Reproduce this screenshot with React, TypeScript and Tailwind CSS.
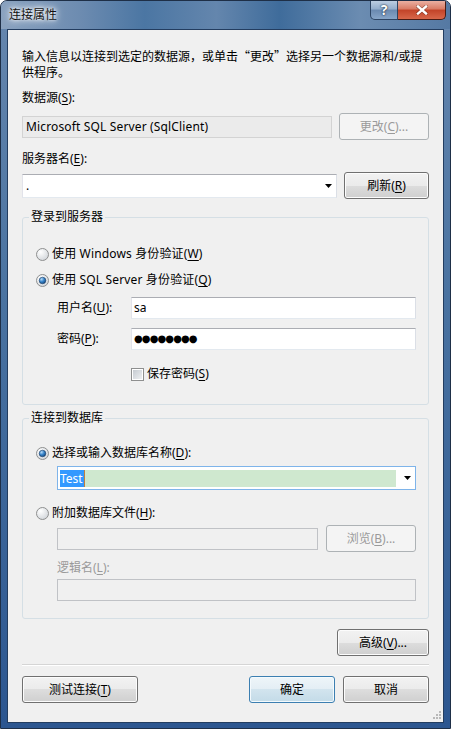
import React from "react";

function U({ children }: { children: React.ReactNode }) {
  return <span className="underline underline-offset-[2px] decoration-[1px]">{children}</span>;
}

function Radio({ checked }: { checked?: boolean }) {
  return (
    <svg width="13" height="13" viewBox="0 0 13 13" className="shrink-0">
      <defs>
        <radialGradient id="rbg" cx="0.35" cy="0.3" r="0.8">
          <stop offset="0" stopColor="#ffffff" />
          <stop offset="1" stopColor="#cfd3d8" />
        </radialGradient>
        <radialGradient id="rdot" cx="0.35" cy="0.3" r="0.75">
          <stop offset="0" stopColor="#b9dcf7" />
          <stop offset="0.5" stopColor="#3a86cc" />
          <stop offset="1" stopColor="#12477f" />
        </radialGradient>
      </defs>
      <circle cx="6.5" cy="6.5" r="6" fill="url(#rbg)" stroke="#8e8f8f" strokeWidth="1" />
      {checked && <circle cx="6.5" cy="6.5" r="3.3" fill="url(#rdot)" stroke="#1d3e66" strokeWidth="0.6" />}
    </svg>
  );
}

function Check() {
  return (
    <div className="w-[13px] h-[13px] shrink-0 border border-[#8e8f8f] bg-white p-[1px]">
      <div className="w-full h-full bg-[linear-gradient(135deg,#c6cbd1,#eef0f2)]" />
    </div>
  );
}

function Arrow() {
  return (
    <svg width="7" height="4" viewBox="0 0 7 4" className="shrink-0">
      <path d="M0 0h7L3.5 4z" fill="#000" />
    </svg>
  );
}

function Btn({ children, className = "", disabled, def }: { children: React.ReactNode; className?: string; disabled?: boolean; def?: boolean }) {
  let cls = "";
  if (disabled) cls = "border-[#adb2b5] bg-[#f4f4f4] text-[#9a9a9a]";
  else if (def)
    cls = "border-[#3c7fb1] bg-[linear-gradient(to_bottom,#eef5f9_0%,#e3eef4_50%,#d2e4ee_50%,#c3dbe8_100%)] shadow-[inset_0_0_0_1px_#f4fafd] text-black";
  else
    cls = "border-[#707070] bg-[linear-gradient(to_bottom,#f2f2f2_0%,#ebebeb_50%,#dddddd_50%,#cfcfcf_100%)] shadow-[inset_0_0_0_1px_#fcfcfc] text-black";
  return (
    <div className={`h-[27px] shrink-0 flex items-center justify-center rounded-[3px] border ${cls} ${className}`}>
      {children}
    </div>
  );
}

export default function App() {
  return (
    <div className="w-[451px] h-[729px] flex flex-col rounded-t-[7px] border border-[#1e2f47] bg-[linear-gradient(to_bottom,#7f99b8_0px,#6485ad_28px,#4a73a1_40%,#2c5690_100%)] font-['Noto_Sans','Noto_Sans_CJK_SC',sans-serif] text-[12px] leading-[16px] text-black overflow-hidden">
      {/* title bar */}
      <div className="h-[28px] shrink-0 flex items-start justify-between bg-[linear-gradient(to_right,#8aa2bf_0%,#6c8bb0_18%,#4b76a3_32%,#6486ad_48%,#3f6c9b_62%,#6b8cb1_80%,#5579a3_100%)]">
        <div className="pl-[8px] pt-[6px] [text-shadow:0_0_6px_#fff,0_0_10px_#fff,0_0_3px_#fff] text-[#111]">连接属性</div>
        <div className="flex mr-[4px]">
          <div className="w-[28px] h-[19px] flex items-center justify-center border border-[#2d4463] border-t-0 rounded-bl-[5px] bg-[linear-gradient(to_bottom,#bccde2_0%,#93adcc_45%,#6a89b0_50%,#87a5c8_100%)] text-white font-bold text-[14px] leading-[14px] [text-shadow:0_0_2px_#1a2a40,0_0_1px_#1a2a40]">
            ?
          </div>
          <div className="w-[48px] h-[19px] flex items-center justify-center border border-[#4a1c14] border-t-0 border-l-0 rounded-br-[5px] bg-[linear-gradient(to_bottom,#eab0a2_0%,#d87a64_45%,#c24328_50%,#d8674a_100%)]">
            <svg width="12" height="10" viewBox="0 0 12 10">
              <path d="M2 1.5L10 8.5M10 1.5L2 8.5" stroke="#3a1208" strokeWidth="3.6" strokeLinecap="square" opacity="0.45" />
              <path d="M2 1.5L10 8.5M10 1.5L2 8.5" stroke="#fff" strokeWidth="2.4" strokeLinecap="square" />
            </svg>
          </div>
        </div>
      </div>

      {/* client area */}
      <div className="relative flex-1 mx-[6px] mb-[5px] border border-[#233d60] bg-[#f0f0f0] flex flex-col pl-[14px] pr-[14px]">
        <div className="mt-[18px]">
          输入信息以连接到选定的数据源，或单击<span className="font-['Noto_Sans_CJK_SC']">“</span>更改<span className="font-['Noto_Sans_CJK_SC']">”</span>选择另一个数据源和/或提
          <br />
          供程序。
        </div>

        <div className="mt-[9px]">
          数据源(<U>S</U>):
        </div>
        <div className="mt-[7px] h-[27px] flex items-center justify-between">
          <div className="w-[310px] h-[22px] border border-[#d3d3d3] bg-[#ebebeb] flex items-center pl-[3px] tracking-[0.15px]">
            Microsoft SQL Server (SqlClient)
          </div>
          <Btn disabled className="w-[90px]">
            更改(<U>C</U>)...
          </Btn>
        </div>

        <div className="mt-[11px]">
          服务器名(<U>E</U>):
        </div>
        <div className="mt-[5px] h-[27px] flex items-center justify-between">
          <div className="w-[315px] h-[24px] border border-[#abadb3] border-l-[#e2e3ea] border-r-[#dbdfe6] border-b-[#e3e9ef] bg-white flex items-center justify-between pl-[3px] pr-[4px]">
            <span>.</span>
            <Arrow />
          </div>
          <Btn className="w-[85px]">
            刷新(<U>R</U>)
          </Btn>
        </div>

        {/* group 1 */}
        <fieldset className="mt-[10px] border border-[#d5dfe5] rounded-[3px] pl-[13px] pr-[12px] pb-[22px]">
          <legend className="ml-[-7px] px-[2px] leading-[16px]">登录到服务器</legend>
          <div className="mt-[21px] h-[16px] flex items-center gap-[3px]">
            <Radio />
            <span className="tracking-[0.15px]">使用 Windows 身份验证(<U>W</U>)</span>
          </div>
          <div className="mt-[10px] h-[16px] flex items-center gap-[3px]">
            <Radio checked />
            <span className="tracking-[0.15px]">使用 SQL Server 身份验证(<U>Q</U>)</span>
          </div>
          <div className="mt-[9px] h-[22px] flex items-center">
            <div className="w-[95px] shrink-0 pl-[21px]">
              用户名(<U>U</U>):
            </div>
            <div className="flex-1 h-[22px] border border-[#abadb3] border-l-[#e2e3ea] border-r-[#dbdfe6] border-b-[#e3e9ef] bg-white flex items-center pl-[2px]">
              sa
            </div>
          </div>
          <div className="mt-[9px] h-[22px] flex items-center">
            <div className="w-[95px] shrink-0 pl-[21px]">
              密码(<U>P</U>):
            </div>
            <div className="flex-1 h-[22px] border border-[#abadb3] border-l-[#e2e3ea] border-r-[#dbdfe6] border-b-[#e3e9ef] bg-white flex items-center pl-[2px] font-['DejaVu_Sans'] text-[10px] tracking-[-0.9px]">
              ●●●●●●●●
            </div>
          </div>
          <div className="mt-[16px] h-[16px] pl-[95px] flex items-center gap-[3px]">
            <Check />
            <span>保存密码(<U>S</U>)</span>
          </div>
        </fieldset>

        {/* group 2 */}
        <fieldset className="mt-[5px] border border-[#d5dfe5] rounded-[3px] pl-[13px] pr-[12px] pb-[17px]">
          <legend className="ml-[-7px] px-[2px] leading-[16px]">连接到数据库</legend>
          <div className="mt-[19px] h-[16px] flex items-center gap-[3px]">
            <Radio checked />
            <span>
              选择或输入数据库名称(<U>D</U>):
            </span>
          </div>
          <div className="mt-[5px] ml-[21px] h-[24px] border border-[#7eb4ea] bg-white flex items-center pl-[2px] pr-[4px]">
            <div className="flex-1 h-[17px] bg-[#cfe8cf] flex items-center mr-[8px]">
              <span className="bg-[#3399ff] text-white h-[17px] leading-[17px] pr-[1px]">Test</span>
              <span className="w-[1px] h-[17px] bg-[#c08040]" />
            </div>
            <Arrow />
          </div>
          <div className="mt-[15px] h-[16px] flex items-center gap-[3px]">
            <Radio />
            <span>
              附加数据库文件(<U>H</U>):
            </span>
          </div>
          <div className="mt-[4px] h-[27px] pl-[21px] flex items-center justify-between">
            <div className="w-[261px] h-[22px] border border-[#c0c2c6] bg-[#f0f0f0]" />
            <Btn disabled className="w-[90px]">
              浏览(<U>B</U>)...
            </Btn>
          </div>
          <div className="mt-[8px] pl-[21px] text-[#9a9a9a]">
            逻辑名(<U>L</U>):
          </div>
          <div className="mt-[3px] ml-[21px] h-[22px] border border-[#c0c2c6] bg-[#f0f0f0]" />
        </fieldset>

        <div className="mt-[10px] flex justify-end">
          <Btn className="w-[92px]">
            高级(<U>V</U>)...
          </Btn>
        </div>

        <div className="mt-[8px] h-[2px] border-t border-[#d5d5d5] border-b border-b-white" />

        <div className="mt-[10px] flex items-center">
          <Btn className="w-[116px]">
            测试连接(<U>T</U>)
          </Btn>
          <div className="flex-1" />
          <Btn def className="w-[86px]">
            确定
          </Btn>
          <Btn className="w-[86px] ml-[8px]">取消</Btn>
        </div>

        {/* size grip */}
        <svg width="8" height="8" viewBox="0 0 8 8" className="absolute right-[2px] bottom-[3px]">
          {[
            [6, 0],
            [6, 3],
            [3, 3],
            [6, 6],
            [3, 6],
            [0, 6],
          ].map(([x, y], i) => (
            <rect key={i} x={x} y={y} width="2" height="2" fill="#b8b8b8" />
          ))}
        </svg>
      </div>
    </div>
  );
}
